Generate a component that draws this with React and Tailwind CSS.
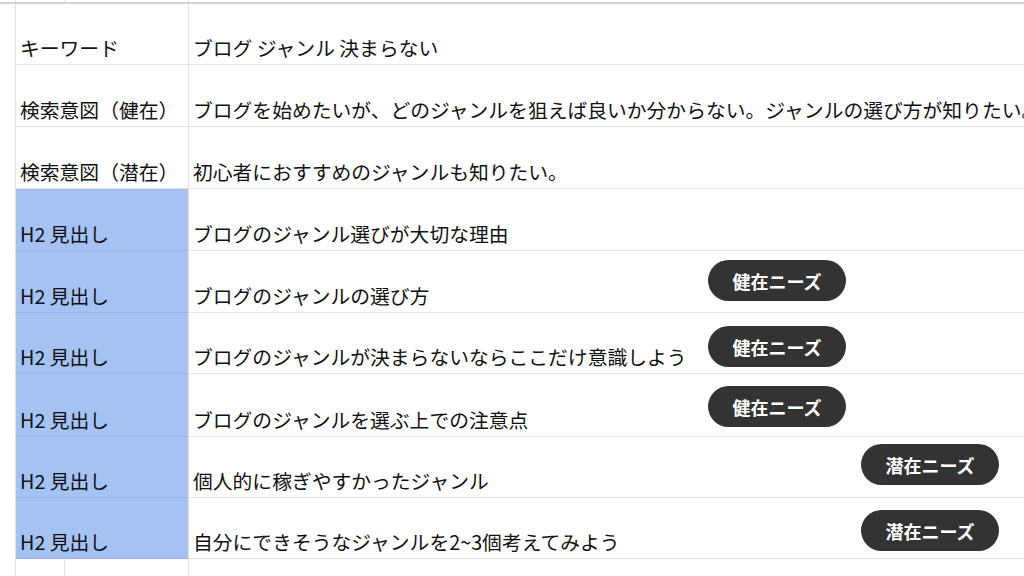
const rows = [
  { label: 'キーワード', text: 'ブログ ジャンル 決まらない', h: 'h-[61px]' },
  { label: '検索意図（健在）', text: 'ブログを始めたいが、どのジャンルを狙えば良いか分からない。ジャンルの選び方が知りたい。', h: 'h-[62px]' },
  { label: '検索意図（潜在）', text: '初心者におすすめのジャンルも知りたい。', h: 'h-[62px]' },
  { label: 'H2 見出し', text: 'ブログのジャンル選びが大切な理由', h: 'h-[62px]', blue: true },
  { label: 'H2 見出し', text: 'ブログのジャンルの選び方', h: 'h-[62px]', blue: true },
  { label: 'H2 見出し', text: 'ブログのジャンルが決まらないならここだけ意識しよう', h: 'h-[61px]', blue: true },
  { label: 'H2 見出し', text: 'ブログのジャンルを選ぶ上での注意点', h: 'h-[63px]', blue: true },
  { label: 'H2 見出し', text: '個人的に稼ぎやすかったジャンル', h: 'h-[61px]', blue: true },
  { label: 'H2 見出し', text: '自分にできそうなジャンルを2~3個考えてみよう', h: 'h-[61px]', blue: true },
];

// floating shapes placed over the sheet
const badges = [
  { label: '健在ニーズ', pos: 'left-[708px] top-[260px]' },
  { label: '健在ニーズ', pos: 'left-[708px] top-[326px]' },
  { label: '健在ニーズ', pos: 'left-[708px] top-[386px]' },
  { label: '潜在ニーズ', pos: 'left-[861px] top-[444px]' },
  { label: '潜在ニーズ', pos: 'left-[861px] top-[510px]' },
];

function Row({ label, text, h, blue }) {
  return (
    <div className={`flex ${h}`}>
      <div className="w-[15px] shrink-0" />
      <div
        className={`w-[173px] shrink-0 border-l border-b flex items-end pl-[4px] pb-[4px] whitespace-nowrap ${
          blue ? 'bg-[#a4c2f4] border-l-[#e2e2e2] border-b-[#97b5e8]' : 'border-[#e2e2e2]'
        }`}
      >
        {label}
      </div>
      <div className="flex-1 min-w-0 border-l border-b border-[#e2e2e2] flex items-end pl-[4px] pb-[4px] whitespace-nowrap overflow-hidden">
        {text}
      </div>
    </div>
  );
}

function GridStrip({ h }) {
  return (
    <div className={`flex ${h}`}>
      <div className="w-[15px] shrink-0" />
      <div className="w-[49px] shrink-0 border-l border-[#e2e2e2]" />
      <div className="w-[124px] shrink-0 border-l border-[#e2e2e2]" />
      <div className="flex-1 border-l border-[#e2e2e2]" />
    </div>
  );
}

function App() {
  return (
    <div
      className="relative w-[1024px] h-[576px] overflow-hidden bg-white text-[#111] text-[19.8px] leading-[24px]"
      style={{ fontFamily: '"Noto Sans CJK JP", "Noto Sans", sans-serif' }}
    >
      <GridStrip h="h-[2px]" />
      <div className="h-[2px] bg-[#d3d3d3]" />

      {rows.map((r, i) => (
        <Row key={i} {...r} />
      ))}

      <GridStrip h="h-[20px]" />

      {badges.map((b, i) => (
        <div
          key={i}
          className={`absolute ${b.pos} w-[138px] h-[41px] rounded-full bg-[#333333] text-white font-bold text-[18px] flex items-center justify-center`}
        >
          {b.label}
        </div>
      ))}
    </div>
  );
}

export default App;
